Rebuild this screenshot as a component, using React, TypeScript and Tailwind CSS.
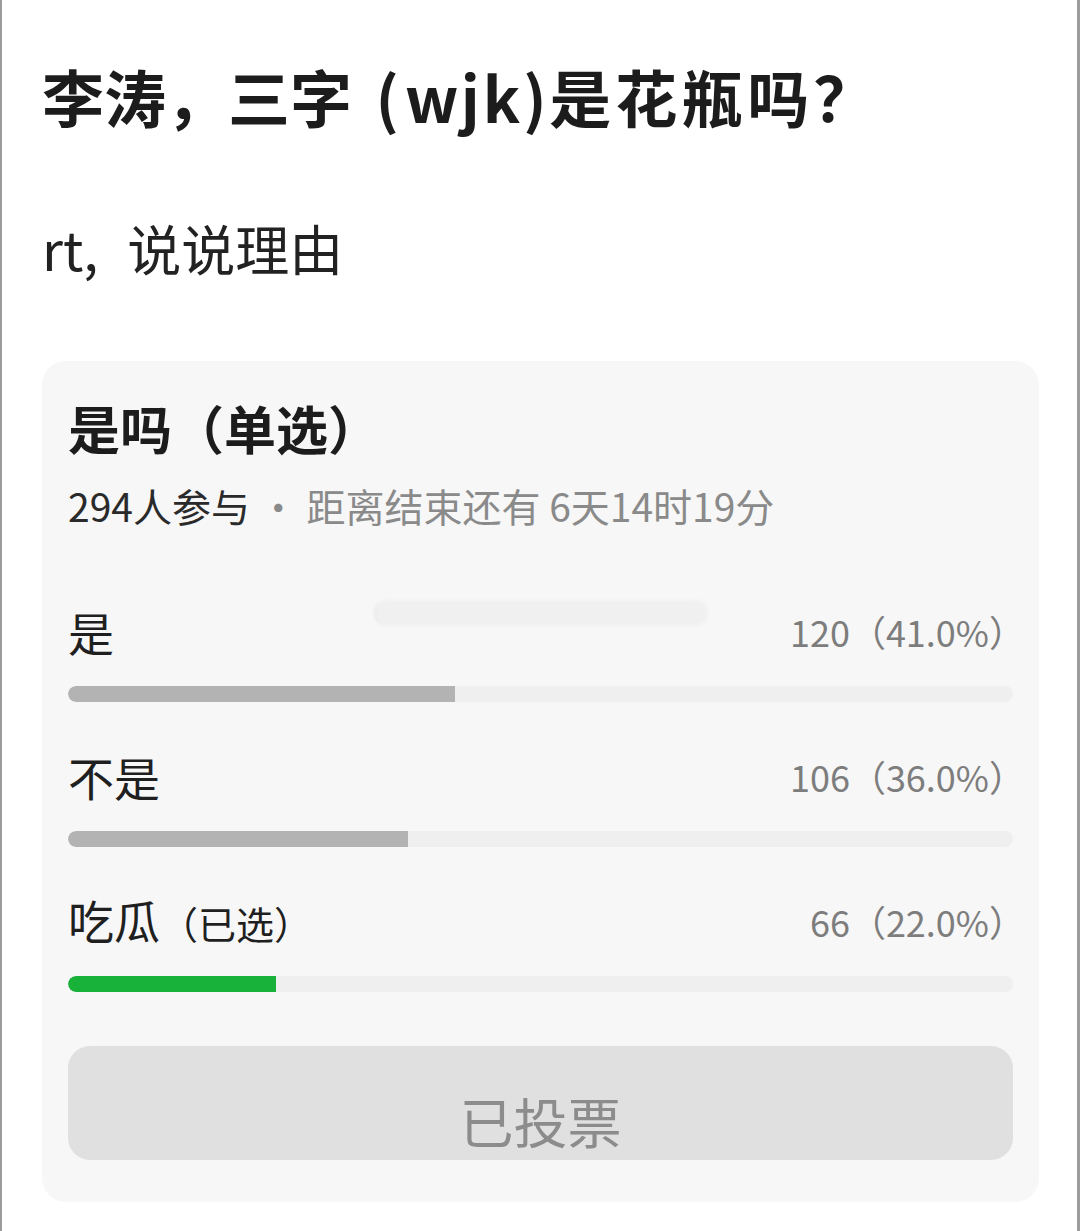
import React from 'react';

const options = [
  { label: '是', count: 120, pct: 41, picked: false },
  { label: '不是', count: 106, pct: 36, picked: false },
  { label: '吃瓜', count: 66, pct: 22, picked: true },
];

export default function App() {
  return (
    <div
      className="w-[1080px] h-[1231px] bg-white border-l-2 border-r-[3px] border-[#9c9c9c] text-[#1c1c1c] overflow-hidden"
      style={{ fontFamily: '"Noto Sans CJK SC", "Noto Sans", sans-serif' }}
    >
      <div className="pl-[40px] pr-[38px] pt-[60px]">
        <h1 className="text-[62px] leading-[72px] font-bold whitespace-nowrap">
          李涛，三字<span className="inline-block w-[53px] text-right pr-[6px]">(</span>
          <span className="tracking-[3px]">wjk</span>
          <span className="inline-block w-[26px]">)</span>
          <span className="tracking-[4px]">是花瓶吗？</span>
        </h1>
        <p className="mt-[85px] text-[54px] leading-[62px] text-[#222]">
          rt<span className="inline-block w-[44px]">,</span>说说理由
        </p>

        <div className="mt-[82px] bg-[#f7f7f7] rounded-[24px] pt-[38px] pb-[42px] px-[26px]">
          <h2 className="text-[52px] leading-[58px] font-bold">是吗（单选）</h2>
          <div className="mt-[26px] text-[39px] leading-[44px] whitespace-nowrap">
            <span className="text-[#2a2a2a]">294人参与</span>
            <span className="text-[#8a8a8a]">  ·  距离结束还有 6天14时19分</span>
          </div>

          <div className="mt-[79px] flex flex-col">
            {options.map((o, i) => (
              <div key={o.label} className={i > 0 ? 'mt-[49px]' : ''}>
                <div className="relative flex items-center justify-between h-[50px]">
                  <span className="text-[46px] leading-[50px] text-[#1f1f1f]">
                    {o.label}
                    {o.picked && <span className="text-[38px]">（已选）</span>}
                  </span>
                  <span className="text-[36px] leading-[50px] text-[#7d7d7d] -mr-[12px]">
                    {o.count}（{o.pct.toFixed(1)}%）
                  </span>
                  {i === 0 && (
                    <div className="absolute left-[306px] top-[-6px] w-[334px] h-[26px] rounded-full bg-[#ececec] border-l-2 border-[#dcdcdc] blur-[1.5px] opacity-60" />
                  )}
                </div>
                <div className="mt-[30px] h-[16px] rounded-full bg-[#efefef] overflow-hidden">
                  <div
                    className={`h-full rounded-l-full ${o.picked ? 'bg-[#18b23a]' : 'bg-[#b3b3b3]'}`}
                    style={{ width: `${o.pct}%` }}
                  />
                </div>
              </div>
            ))}
          </div>

          <button
            type="button"
            className="mt-[54px] w-full h-[114px] rounded-[22px] bg-[#e0e0e0] text-[54px] text-[#8c8c8c] pt-[36px] leading-[60px]"
          >
            已投票
          </button>
        </div>
      </div>
    </div>
  );
}
